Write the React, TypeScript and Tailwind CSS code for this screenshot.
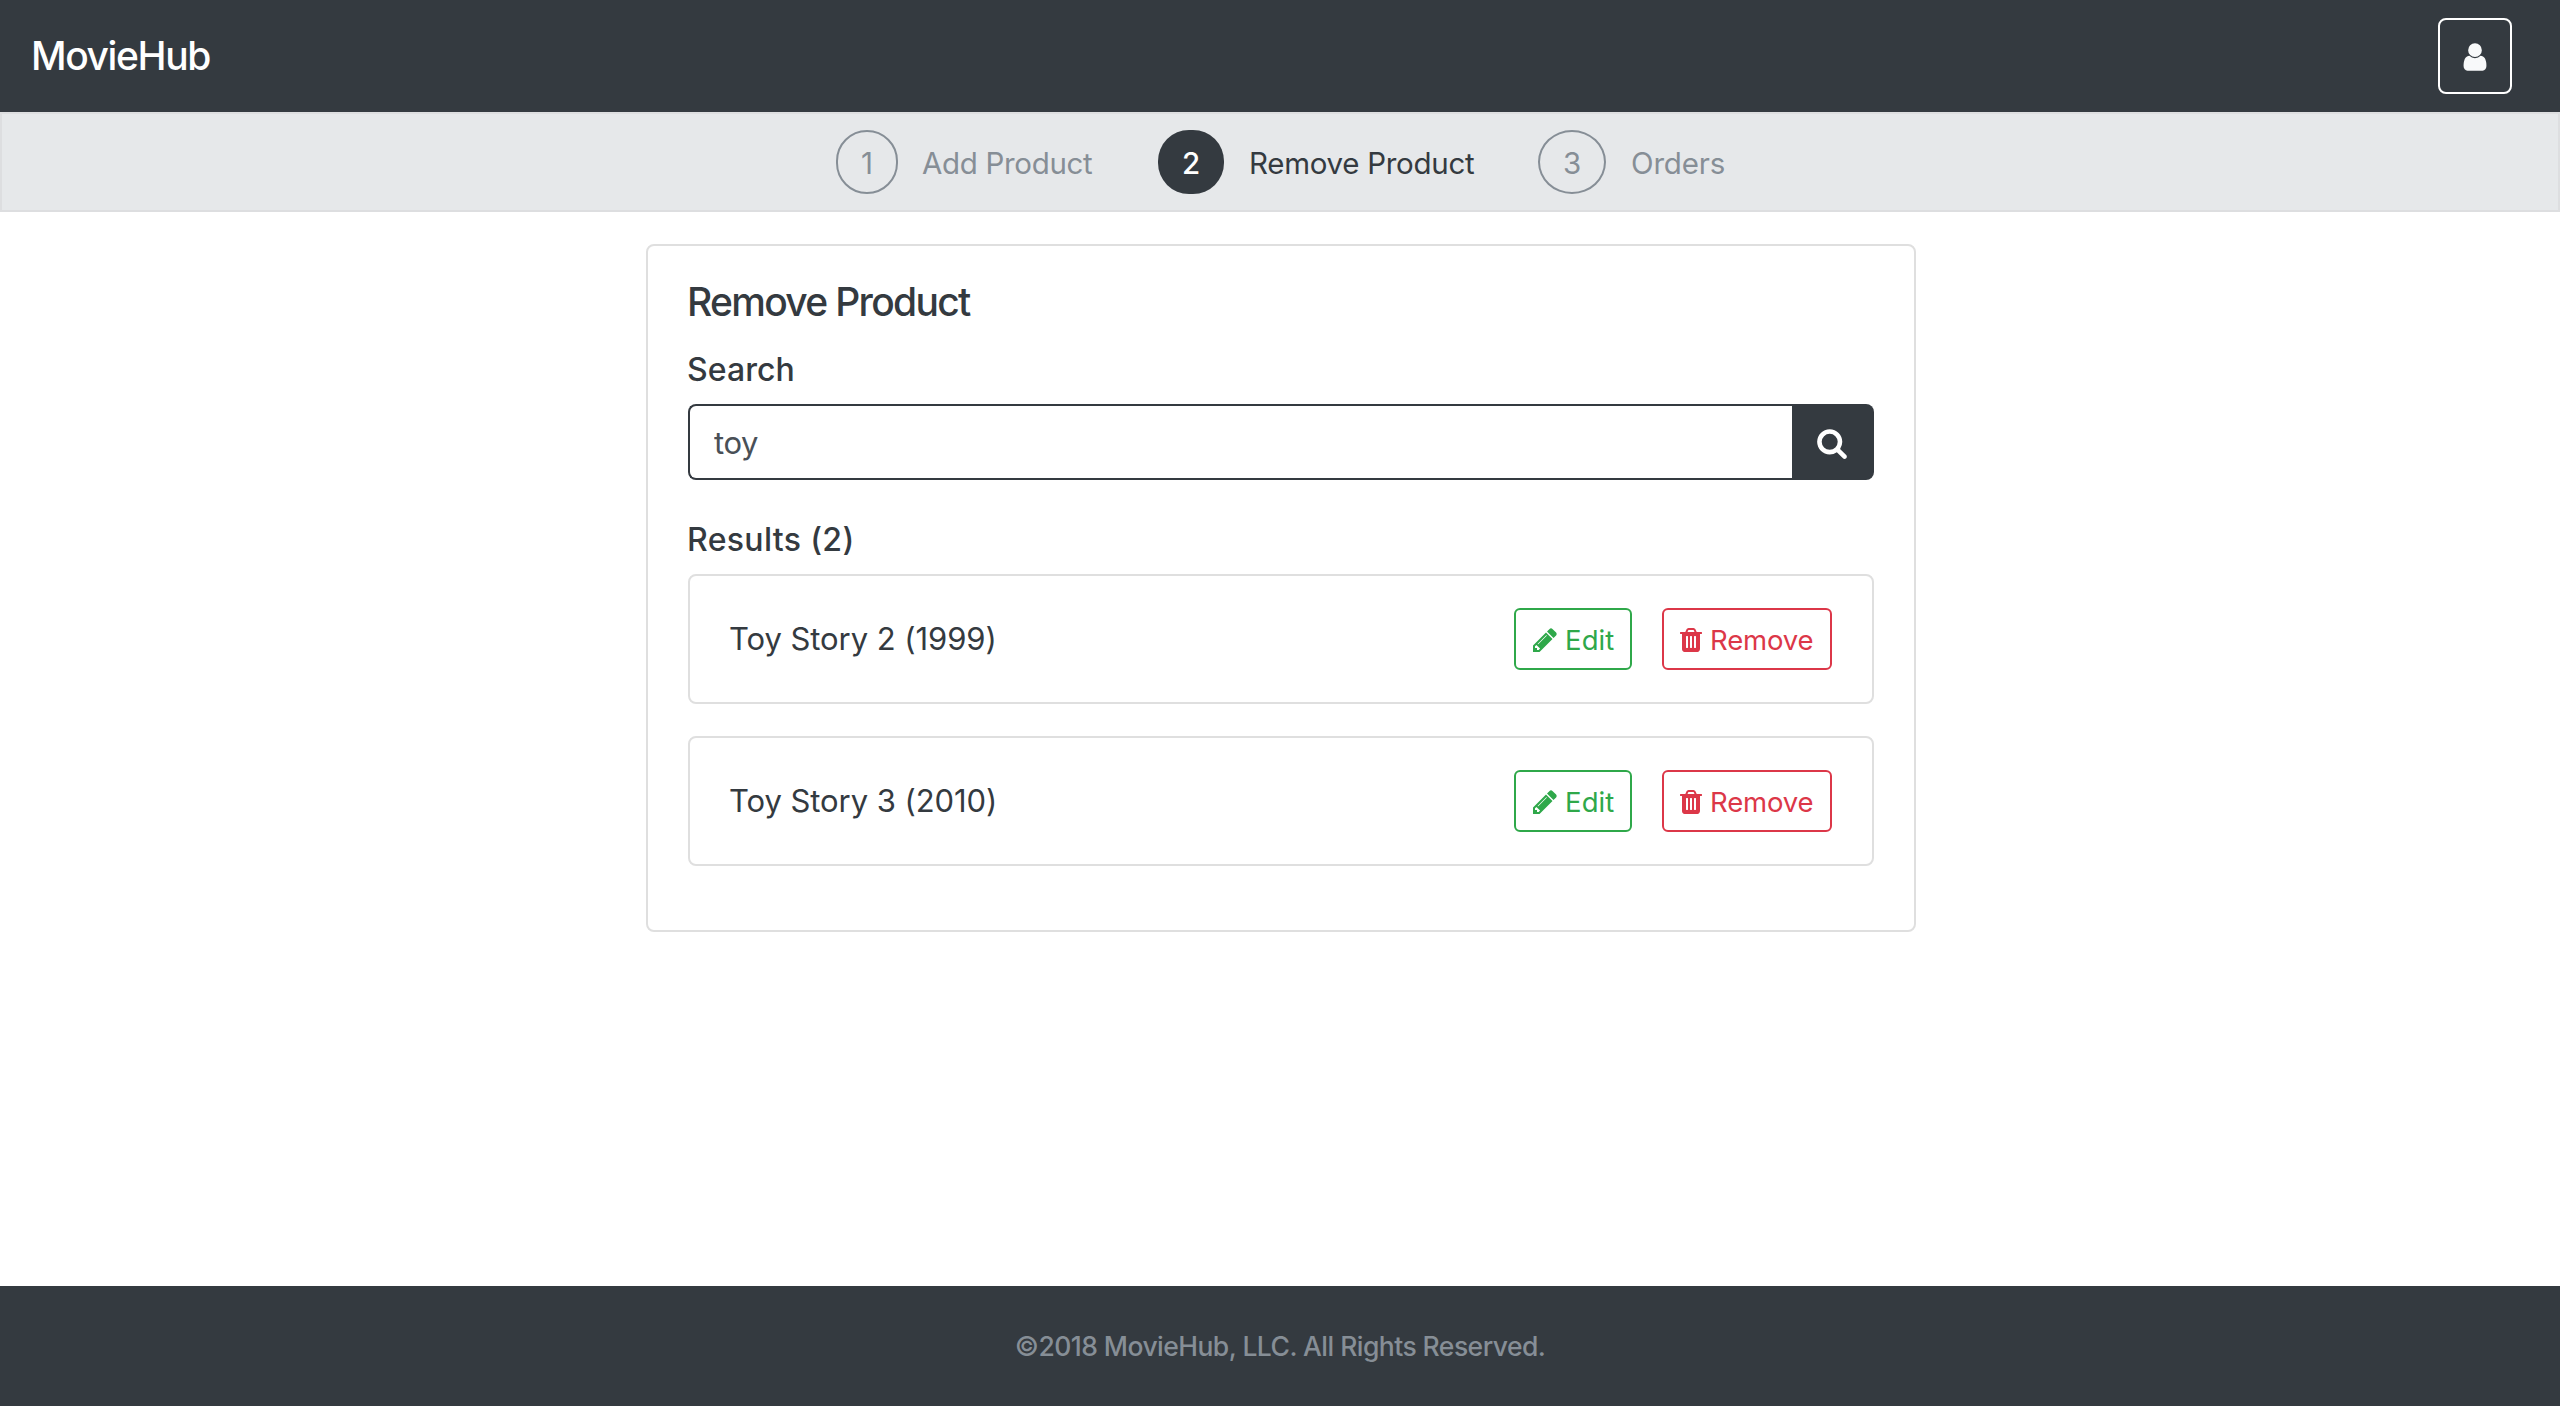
import React from "react";

type IconProps = { className: string };

const UserIcon = ({ className }: IconProps) => (
  <svg viewBox="0 0 1792 1792" className={className} fill="currentColor">
    <path d="M1536 1399q0 109-62.5 187t-150.5 78h-854q-88 0-150.5-78t-62.5-187q0-85 8.5-160.5t31.5-152 58.5-131 94-89 134.5-34.5q131 128 313 128t313-128q76 0 134.5 34.5t94 89 58.5 131 31.5 152 8.5 160.5zm-256-887q0 159-112.5 271.5t-271.5 112.5-271.5-112.5-112.5-271.5 112.5-271.5 271.5-112.5 271.5 112.5 112.5 271.5z" />
  </svg>
);

const SearchIcon = ({ className }: IconProps) => (
  <svg viewBox="0 0 1792 1792" className={className} fill="currentColor">
    <path d="M1216 832q0-185-131.5-316.5t-316.5-131.5-316.5 131.5-131.5 316.5 131.5 316.5 316.5 131.5 316.5-131.5 131.5-316.5zm512 832q0 52-38 90t-90 38q-54 0-90-38l-343-342q-179 124-399 124-143 0-273.5-55.5t-225-150-150-225-55.5-273.5 55.5-273.5 150-225 225-150 273.5-55.5 273.5 55.5 225 150 150 225 55.5 273.5q0 220-124 399l343 343q37 37 37 90z" />
  </svg>
);

const PencilIcon = ({ className }: IconProps) => (
  <svg viewBox="128 0 1536 1792" className={className} fill="currentColor">
    <path d="M491 1536l91-91-235-235-91 91v107h128v128h107zm523-928q0-22-22-22-10 0-17 7l-542 542q-7 7-7 17 0 22 22 22 10 0 17-7l542-542q7-7 7-17zm-54-192l416 416-832 832h-416v-416zm683 96q0 53-37 90l-166 166-416-416 166-165q36-38 90-38 53 0 91 38l235 234q37 39 37 91z" />
  </svg>
);

const TrashIcon = ({ className }: IconProps) => (
  <svg viewBox="192 0 1408 1792" className={className} fill="currentColor">
    <path d="M704 1376v-704q0-14-9-23t-23-9h-64q-14 0-23 9t-9 23v704q0 14 9 23t23 9h64q14 0 23-9t9-23zm256 0v-704q0-14-9-23t-23-9h-64q-14 0-23 9t-9 23v704q0 14 9 23t23 9h64q14 0 23-9t9-23zm256 0v-704q0-14-9-23t-23-9h-64q-14 0-23 9t-9 23v704q0 14 9 23t23 9h64q14 0 23-9t9-23zm-544-992h448l-48-117q-7-9-17-11h-317q-10 2-17 11zm928 32v64q0 14-9 23t-23 9h-96v948q0 83-47 143.5t-113 60.5h-832q-66 0-113-58.5t-47-141.5v-952h-96q-14 0-23-9t-9-23v-64q0-14 9-23t23-9h309l70-167q15-37 54-63t79-26h320q40 0 79 26t54 63l70 167h309q14 0 23 9t9 23z" />
  </svg>
);

const steps = [
  {
    label: "Add Product",
    item: "w-[322px] text-[#868e96]",
    badge: "w-[62px] rounded-[31px] border-2 border-[#868e96]",
    text: "-ml-px tracking-[-0.32px]",
  },
  {
    label: "Remove Product",
    item: "w-[380px] text-[#343a40]",
    badge: "w-[66px] rounded-[31px] bg-[#343a40] font-medium text-white",
    text: "tracking-[-0.29px]",
  },
  {
    label: "Orders",
    item: "w-[186px] text-[#868e96]",
    badge: "w-[68px] rounded-[50%] border-2 border-[#868e96]",
    text: "tracking-[-0.17px]",
  },
];

const results = ["Toy Story 2 (1999)", "Toy Story 3 (2010)"];

export default function App() {
  return (
    <div className="flex h-[1406px] w-[2560px] flex-col bg-white font-['Inter',sans-serif] text-[#343a40]">
      <header className="flex h-28 items-center justify-between bg-[#343a40] pr-12 pl-[31px]">
        <a className="text-[39px] leading-[60px] font-medium tracking-[-1.4px] text-white">MovieHub</a>
        <button className="flex h-[76px] w-[74px] items-center justify-center rounded-lg border-2 border-white pt-px text-[#f8f9fa]">
          <UserIcon className="size-8" />
        </button>
      </header>

      <nav className="flex h-[100px] justify-center border-2 border-[#dddee0] bg-[#e6e8ea]">
        <ol className="flex items-center">
          {steps.map((step, i) => (
            <li key={step.label} className={`flex items-center gap-[25px] text-[29.5px] whitespace-nowrap ${step.item}`}>
              <span className={`flex h-16 shrink-0 items-center justify-center pt-0.5 ${step.badge}`}>{i + 1}</span>
              <span className={`pt-0.5 ${step.text}`}>{step.label}</span>
            </li>
          ))}
        </ol>
      </nav>

      <main className="flex flex-1 justify-center pt-8 pl-0.5">
        <section className="flex h-[688px] w-[1270px] flex-col rounded-lg border-2 border-[#dfdfdf] px-10 pt-8">
          <h1 className="-ml-px text-[39px] leading-[48px] font-medium tracking-[-1.7px]">Remove Product</h1>
          <label className="mt-[25px] -ml-px text-[32px] leading-[38px] font-medium tracking-[0.06px]">Search</label>
          <div className="mt-[15px] flex h-[76px]">
            <input
              type="text"
              defaultValue="toy"
              className="min-w-0 flex-1 rounded-l-lg border-2 border-r-0 border-[#343a40] px-6 pt-0.5 text-[31px] tracking-[-0.4px] text-[#495057] outline-none"
            />
            <button className="flex w-[82px] items-center justify-center rounded-r-lg bg-[#343a40] pt-px pr-0.5 text-white">
              <SearchIcon className="size-8" />
            </button>
          </div>
          <h2 className="mt-[41px] -ml-px text-[32px] leading-[38px] font-medium tracking-[0.34px]">Results (2)</h2>
          <ul className="mt-[15px] flex flex-col gap-8">
            {results.map((title) => (
              <li key={title} className="flex h-[130px] items-center rounded-lg border-2 border-[#dfdfdf] px-10">
                <span className="-ml-px flex-1 text-[31px] tracking-[-0.06px]">{title}</span>
                <button className="mr-[30px] flex h-[62px] w-[118px] items-center gap-2 rounded-md border-2 border-[#2fa84a] pl-4 text-[27.5px] text-[#2fa84a]">
                  <PencilIcon className="mt-px ml-px h-7 w-6 shrink-0" />
                  <span className="pt-[3px] tracking-[0.1px]">Edit</span>
                </button>
                <button className="flex h-[62px] w-[170px] items-center gap-2 rounded-md border-2 border-[#dc3748] pl-4 text-[27.5px] text-[#dc3748]">
                  <TrashIcon className="mt-px h-7 w-[22px] shrink-0" />
                  <span className="pt-[3px] tracking-[-0.15px]">Remove</span>
                </button>
              </li>
            ))}
          </ul>
        </section>
      </main>

      <footer className="flex h-[120px] items-center justify-center bg-[#343a40] pt-0.5 text-[26.5px] font-medium tracking-[-0.55px] text-[#868e96]">
        ©2018 MovieHub, LLC. All Rights Reserved.
      </footer>
    </div>
  );
}
